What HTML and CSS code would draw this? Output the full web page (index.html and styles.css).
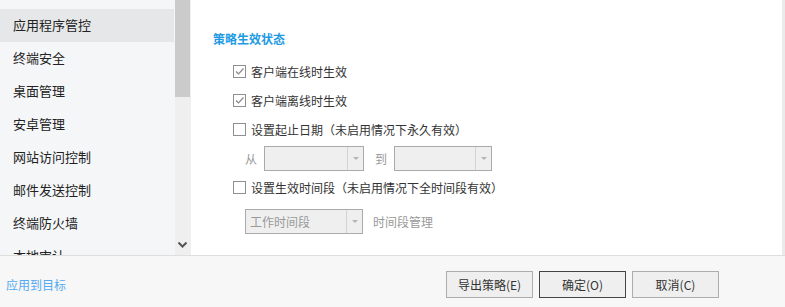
FILE: index.html
```html
<!DOCTYPE html>
<html lang="zh-CN">
<head>
<meta charset="utf-8">
<link rel="stylesheet" href="styles.css">
</head>
<body>
<div class="app">
  <div class="main">
    <div class="sidebar">
      <ul class="nav">
        <li class="nav-item active">应用程序管控</li>
        <li class="nav-item">终端安全</li>
        <li class="nav-item">桌面管理</li>
        <li class="nav-item">安卓管理</li>
        <li class="nav-item">网站访问控制</li>
        <li class="nav-item">邮件发送控制</li>
        <li class="nav-item">终端防火墙</li>
        <li class="nav-item">本地审计</li>
      </ul>
    </div>
    <div class="vscroll">
      <div class="thumb"></div>
      <svg class="arrow" width="9" height="6" viewBox="0 0 9 6"><path d="M0.5 0.5 L4.5 4.5 L8.5 0.5" fill="none" stroke="#555" stroke-width="2"/></svg>
    </div>
    <div class="content">
      <h3 class="section-title">策略生效状态</h3>
      <label class="row check-row"><span class="box checked"><svg width="11" height="11" viewBox="0 0 11 11"><path d="M2 5.5 L4.5 8 L9.5 2.5" fill="none" stroke="#888" stroke-width="1.2"/></svg></span>客户端在线时生效</label>
      <label class="row check-row"><span class="box checked"><svg width="11" height="11" viewBox="0 0 11 11"><path d="M2 5.5 L4.5 8 L9.5 2.5" fill="none" stroke="#888" stroke-width="1.2"/></svg></span>客户端离线时生效</label>
      <label class="row check-row"><span class="box"></span>设置起止日期（未启用情况下永久有效）</label>
      <div class="row sel-row date-row">
        <span class="muted">从</span>
        <span class="select w100"><span class="sel-text"></span><span class="caret"></span></span>
        <span class="muted to">到</span>
        <span class="select w98"><span class="sel-text"></span><span class="caret"></span></span>
      </div>
      <label class="row check-row"><span class="box"></span>设置生效时间段（未启用情况下全时间段有效）</label>
      <div class="row sel-row time-row">
        <span class="select w118"><span class="sel-text">工作时间段</span><span class="caret"></span></span>
        <span class="muted">时间段管理</span>
      </div>
    </div>
    <div class="rscroll"></div>
  </div>
  <div class="footer">
    <a class="link">应用到目标</a>
    <div class="buttons">
      <button class="btn">导出策略(E)</button>
      <button class="btn primary">确定(O)</button>
      <button class="btn">取消(C)</button>
    </div>
  </div>
</div>
</body>
</html>
```

FILE: styles.css
```css
* { box-sizing: border-box; }
html, body { margin: 0; padding: 0; }
body {
  width: 785px; height: 307px; overflow: hidden;
  font-family: "Noto Sans CJK SC", "Microsoft YaHei", sans-serif;
  background: #fff; color: #333;
}
.app { display: flex; flex-direction: column; height: 307px; }
.main { display: flex; height: 255px; overflow: hidden; }
.sidebar { width: 175px; background: #f4f6f8; overflow: hidden; }
.nav { list-style: none; margin: 9px 0 0 0; padding: 0; }
.nav-item {
  height: 33px; line-height: 32px; padding-left: 13px;
  font-size: 13px; color: #222; white-space: nowrap;
}
.nav-item.active { background: #e6e7e9; width: 174px; }
.vscroll { width: 16px; background: #efefef; position: relative; display: flex; flex-direction: column; }
.thumb { height: 97px; background: #cbcbcb; margin-right: 1px; }
.arrow { position: absolute; left: 3px; bottom: 7px; }
.content { flex: 1; padding: 30px 0 0 22px; font-size: 12px; color: #333; }
.rscroll { width: 3px; background: #ebebeb; }
.section-title { margin: 0 0 9px 0; font-size: 12px; font-weight: bold; color: #1f9be3; line-height: 18px; }
.row { display: flex; align-items: center; }
.check-row { height: 29px; padding-left: 20px; gap: 5px; line-height: 17px; }
.box {
  width: 13px; height: 13px; border: 1px solid #8f8f8f; background: #fff;
  display: inline-flex; align-items: center; justify-content: center;
}
.sel-row { padding-left: 32px; color: #aaa; }
.date-row { height: 29px; gap: 7px; }
.date-row .to { margin-left: 4px; }
.time-row { height: 35px; gap: 10px; padding-top: 4px; }
.muted { color: #999; }
.select {
  height: 25px; border: 1px solid #aaa; background: #efefef;
  display: inline-flex; align-items: stretch;
}
.w100 { width: 100px; }
.w98 { width: 98px; }
.w118 { width: 118px; }
.sel-text { flex: 1; line-height: 23px; padding-left: 4px; color: #999; font-size: 12px; }
.caret { width: 16px; border-left: 1px solid #d3d3d3; position: relative; }
.caret::after {
  content: ""; position: absolute; left: 5px; top: 10px;
  border-left: 3px solid transparent; border-right: 3px solid transparent; border-top: 3px solid #b5b5b5;
}
.footer {
  height: 52px; border-top: 1px solid #dedede; background: #f7f7f7;
  display: flex; align-items: center; justify-content: space-between; padding: 0 0 0 6px;
}
.link { color: #55aaf0; font-size: 12px; padding-top: 6px; }
.buttons { display: flex; gap: 6px; margin-right: 66px; padding-top: 6px; }
.btn {
  width: 87px; height: 27px; border: 1px solid #adadad; background: #efefef;
  font-family: inherit; font-size: 12px; color: #333; padding: 0;
}
.btn.primary { border-color: #444; }
```
